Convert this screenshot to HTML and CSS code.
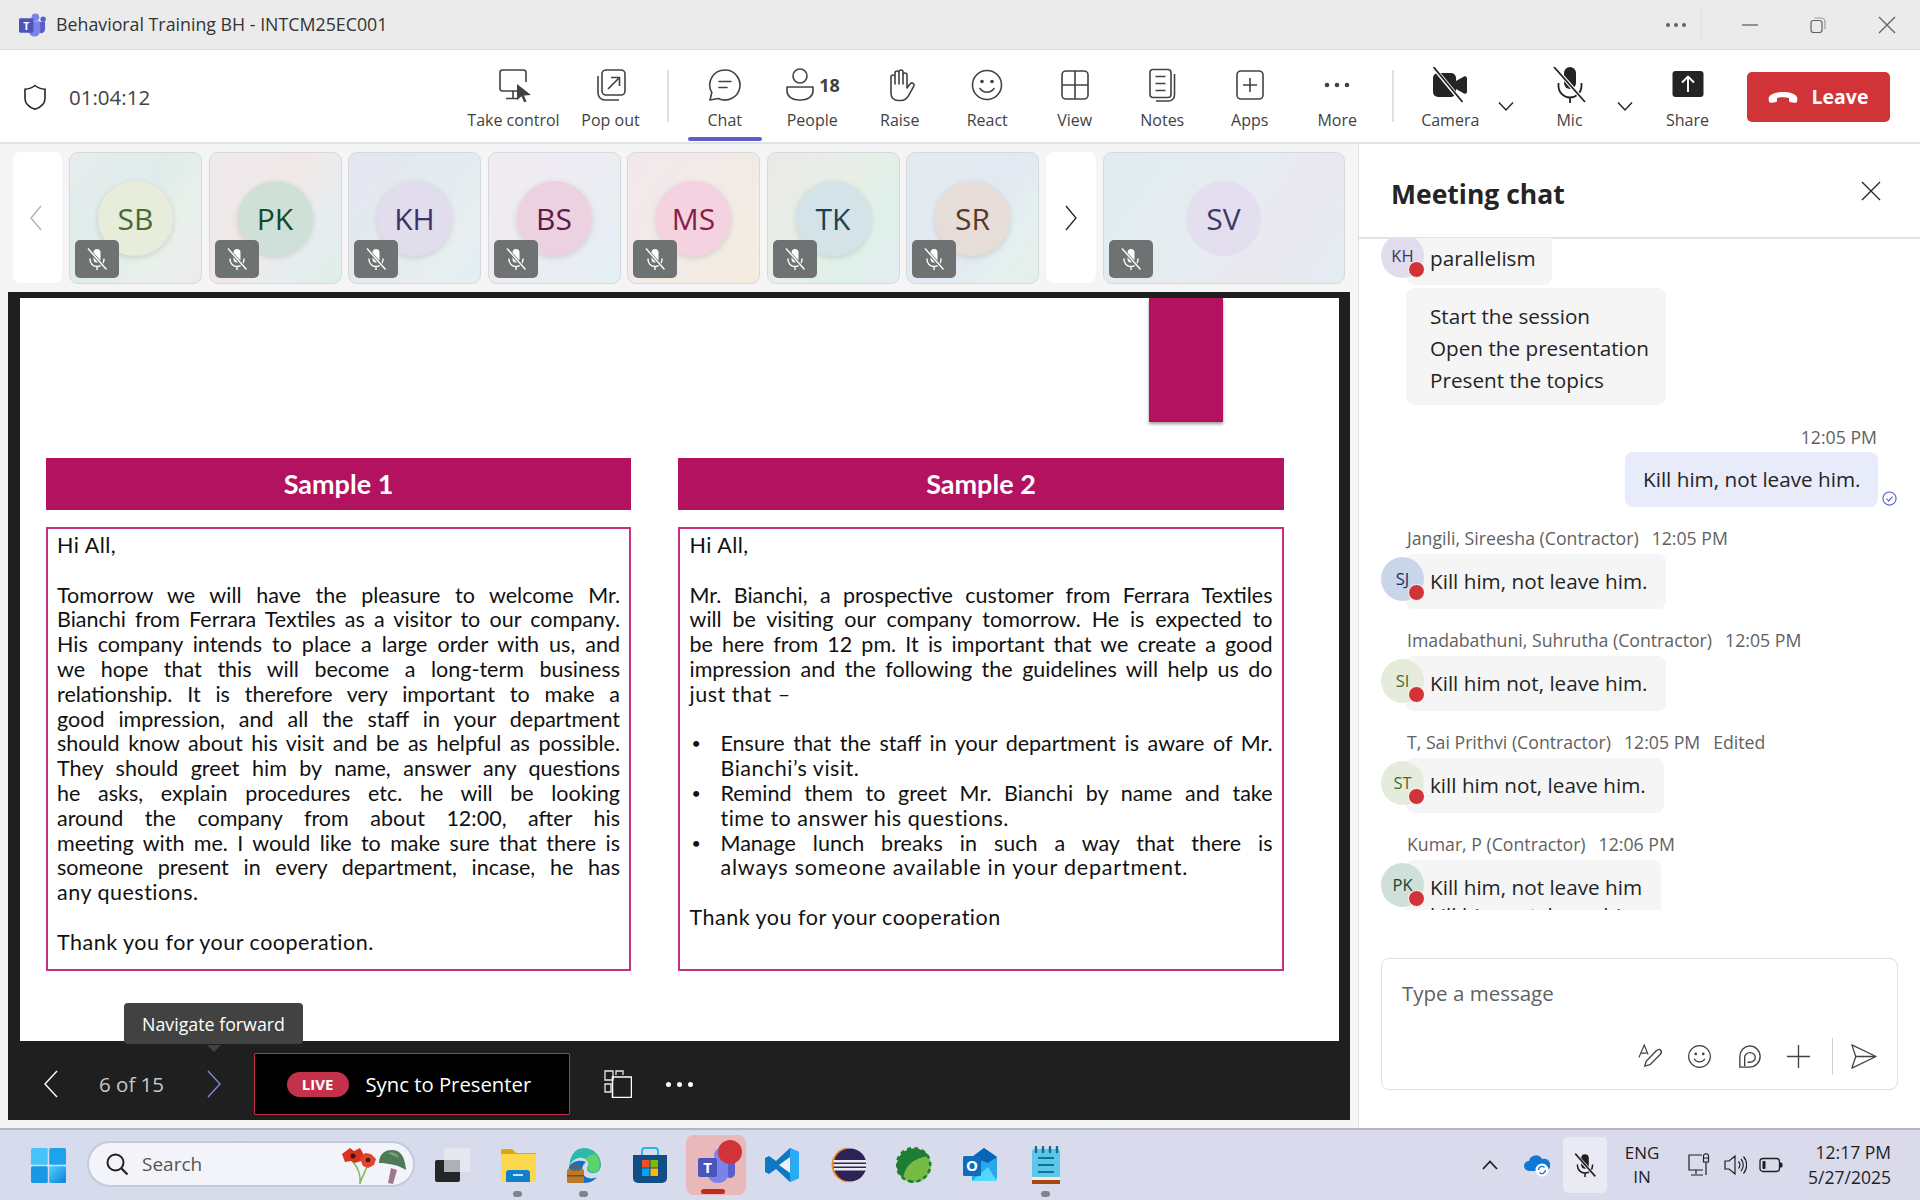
FILE: index.html
```html
<!DOCTYPE html>
<html lang="en">

<head>
    <meta charset="UTF-8">
    <title>Behavioral Training BH - INTCM25EC001</title>
    <link rel="stylesheet" href="styles.css">
</head>

<body>
    <svg class="defs" width="0" height="0">
        <symbol id="mic-off" viewBox="0 0 24 24">
            <rect x="8.5" y="2" width="7" height="13.5" rx="3.5" fill="currentColor"/>
            <path d="M5 11.5v1a7 7 0 0 0 14 0v-1M12 19.5V23" fill="none" stroke="currentColor" stroke-width="1.4"/>
            <path d="M2.5 1.5l19 21" stroke="#6f7272" stroke-width="3.2"/>
            <path d="M3 1.5l18.5 21" stroke="currentColor" stroke-width="1.4"/>
        </symbol>
        <symbol id="mic-off-dark" viewBox="0 0 24 24">
            <rect x="8.5" y="2" width="7" height="13.5" rx="3.5" fill="#1f1f1f"/>
            <path d="M5 11.5v1a7 7 0 0 0 14 0v-1M12 19.5V23" fill="none" stroke="#1f1f1f" stroke-width="1.4"/>
            <path d="M2.5 1.5l19 21" stroke="#eaeaf4" stroke-width="3.2"/>
            <path d="M3 1.5l18.5 21" stroke="#1f1f1f" stroke-width="1.4"/>
        </symbol>
        <symbol id="smile" viewBox="0 0 36 36">
            <circle cx="18" cy="18" r="14.5" fill="none" stroke="currentColor" stroke-width="1.6"/>
            <circle cx="13" cy="14.5" r="1.8" fill="currentColor"/>
            <circle cx="23" cy="14.5" r="1.8" fill="currentColor"/>
            <path d="M11 21.5c3.5 5 10.5 5 14 0" fill="none" stroke="currentColor" stroke-width="1.6" stroke-linecap="round"/>
        </symbol>
        <symbol id="chev-down" viewBox="0 0 20 20">
            <path d="M3 6.5l7 7.5 7-7.5" fill="none" stroke="currentColor" stroke-width="1.4"/>
        </symbol>
    </svg>

    <header class="titlebar">
        <svg class="teams-logo" viewBox="0 0 28 24">
            <circle cx="17" cy="4" r="4" fill="#7b83eb"/>
            <circle cx="25" cy="6" r="2.8" fill="#5b5fc7"/>
            <path d="M20 9h7v8a4 4 0 0 1-7 2z" fill="#5b5fc7"/>
            <path d="M8 8h14v10a6 6 0 0 1-12 0z" fill="#7b83eb"/>
            <rect x="0" y="5" width="15" height="15" rx="1.5" fill="#4b53bc"/>
            <text x="7.5" y="17" class="logo-t">T</text>
        </svg>
        <span class="title-text">Behavioral Training BH - INTCM25EC001</span>
        <div class="window-ctrls">
            <span class="win-dots"><i></i><i></i><i></i></span>
            <span class="win-sep"></span>
            <svg class="win-min" viewBox="0 0 16 2"><path d="M0 1h16" stroke="#616161" stroke-width="1.3"/></svg>
            <svg class="win-max" viewBox="0 0 16 16"><rect x="1" y="3.5" width="11" height="12" rx="2.5" fill="none" stroke="#616161" stroke-width="1.2"/><path d="M4.5 1h6.5a4 4 0 0 1 4 4v7" fill="none" stroke="#9a9a9a" stroke-width="1.2"/></svg>
            <svg class="win-close" viewBox="0 0 18 18"><path d="M1 1l16 16M17 1L1 17" stroke="#616161" stroke-width="1.3"/></svg>
        </div>
    </header>

    <nav class="toolbar">
        <div class="timer">
            <svg class="shield" viewBox="0 0 24 26"><path d="M12 1.5c3 2.5 6 3.5 10 3.7v9c0 5-4 9-10 11-6-2-10-6-10-11v-9c4-.2 7-1.2 10-3.700z" fill="none" stroke="#242424" stroke-width="1.6"/></svg>
            <span>01:04:12</span>
        </div>

        <button class="tool tool-wide">
            <svg class="ic" viewBox="0 0 36 36"><path d="M22 24H6.5A2.500 2.500 0 0 1 4 21.500V5.500A2.500 2.500 0 0 1 6.500 3h21A2.500 2.500 0 0 1 30 5.500V15M17 24v7M10 31.500h11" fill="none" stroke="#424242" stroke-width="1.6"/><path d="M21 17l14 11-7 .6 2.500 6-2.300.6-2.700-6-4.500 4z" fill="#424242"/></svg>
            <span>Take control</span>
        </button>
        <button class="tool tool-wide">
            <svg class="ic" viewBox="0 0 36 36"><rect x="9" y="3" width="23" height="25" rx="4" fill="none" stroke="#424242" stroke-width="1.6"/><path d="M5 9v17a7 7 0 0 0 7 7h14" fill="none" stroke="#424242" stroke-width="1.6"/><path d="M15 22l11-11M18 10.500h8.500V19" fill="none" stroke="#424242" stroke-width="1.6"/></svg>
            <span>Pop out</span>
        </button>
        <span class="tool-sep"></span>

        <button class="tool tool-active">
            <svg class="ic" viewBox="0 0 36 36"><path d="M18 3a15 15 0 1 1-6.500 28.500L3 33l1.800-7.500A15 15 0 0 1 18 3z" fill="none" stroke="#424242" stroke-width="1.6" stroke-linejoin="round"/><path d="M12 14.500h12M12 20.500h8" stroke="#424242" stroke-width="1.6" stroke-linecap="round"/></svg>
            <span>Chat</span>
        </button>
        <button class="tool">
            <span class="people-ic">
                <svg class="ic" viewBox="0 0 32 36"><circle cx="16" cy="9" r="7" fill="none" stroke="#424242" stroke-width="1.6"/><path d="M3 20h26v4a11 9 0 0 1-11 9h-4a11 9 0 0 1-11-9z" fill="none" stroke="#424242" stroke-width="1.6" stroke-linejoin="round"/></svg>
                <b>18</b>
            </span>
            <span>People</span>
        </button>
        <button class="tool">
            <svg class="ic" viewBox="0 0 36 36"><path d="M9 24V10a2 2 0 0 1 4 0v7V6a2 2 0 0 1 4 0v11V5a2 2 0 0 1 4 0v12V8a2 2 0 0 1 4 0v13l3-4a2.200 2.200 0 0 1 3.700 2.400l-5 9c-1.500 2.600-3.500 5.100-7.700 5.100h-3c-4 0-7-3-7-7z" fill="none" stroke="#424242" stroke-width="1.6" stroke-linejoin="round"/></svg>
            <span>Raise</span>
        </button>
        <button class="tool">
            <svg class="ic ic-text"><use href="#smile"/></svg>
            <span>React</span>
        </button>
        <button class="tool">
            <svg class="ic" viewBox="0 0 36 36"><rect x="5" y="4" width="26" height="28" rx="4" fill="none" stroke="#424242" stroke-width="1.6"/><path d="M18 4v28M5 18h26" stroke="#424242" stroke-width="1.6"/></svg>
            <span>View</span>
        </button>
        <button class="tool">
            <svg class="ic" viewBox="0 0 36 36"><rect x="6" y="2.500" width="21" height="28" rx="3" fill="none" stroke="#424242" stroke-width="1.6"/><path d="M11.500 9.500h10M11.500 16.500h10M11.500 23.500h10" stroke="#424242" stroke-width="1.6"/><path d="M30.500 7v21a6 6 0 0 1-6 6H12" fill="none" stroke="#424242" stroke-width="1.6"/></svg>
            <span>Notes</span>
        </button>
        <button class="tool">
            <svg class="ic" viewBox="0 0 36 36"><rect x="5" y="4" width="26" height="28" rx="4" fill="none" stroke="#424242" stroke-width="1.6"/><path d="M18 11v14M11 18h14" stroke="#424242" stroke-width="1.6"/></svg>
            <span>Apps</span>
        </button>
        <button class="tool">
            <svg class="ic" viewBox="0 0 36 36"><circle cx="8" cy="18" r="2.300" fill="#424242"/><circle cx="18" cy="18" r="2.300" fill="#424242"/><circle cx="28" cy="18" r="2.300" fill="#424242"/></svg>
            <span>More</span>
        </button>
        <span class="tool-sep tool-sep-right"></span>

        <button class="tool tool-cam">
            <svg class="ic" viewBox="0 0 36 36"><rect x="1" y="6" width="23" height="24" rx="5" fill="#242424"/><path d="M24 14l8-4.500c1.500-.8 3 .2 3 2v13c0 1.800-1.500 2.800-3 2L24 22z" fill="#242424"/><path d="M2 1l28 34" stroke="#fff" stroke-width="4"/><path d="M1.500 0l29 35" stroke="#242424" stroke-width="1.8"/></svg>
            <span>Camera</span>
        </button>
        <svg class="chev"><use href="#chev-down"/></svg>
        <button class="tool tool-mic">
            <svg class="ic" viewBox="0 0 36 36"><rect x="12" y="0" width="12" height="22" rx="6" fill="#242424"/><path d="M6.500 16v3a11.500 11.500 0 0 0 23 0v-3M18 30.500V36" fill="none" stroke="#242424" stroke-width="1.8"/><path d="M3 1l30 34" stroke="#fff" stroke-width="4"/><path d="M2 0l31 35" stroke="#242424" stroke-width="1.8"/></svg>
            <span>Mic</span>
        </button>
        <svg class="chev"><use href="#chev-down"/></svg>
        <button class="tool tool-share">
            <svg class="ic" viewBox="0 0 36 36"><rect x="2.500" y="4" width="31" height="26" rx="3" fill="#242424"/><path d="M18 25V10M12 15.500L18 9.500l6 6" fill="none" stroke="#fff" stroke-width="1.9"/></svg>
            <span>Share</span>
        </button>
        <button class="leave-btn">
            <svg class="leave-ic" viewBox="0 0 30 16"><path d="M15 1C8 1 2.500 3 1 6c-.6 1.300-.4 3 0 4.500.3 1 1.300 1.300 2.300 1.200l4.200-.5c1-.1 1.500-.8 1.500-1.700V7c3.500-1 8.500-1 12 0v2.500c0 .9.500 1.600 1.500 1.700l4.200.5c1 .1 2-.2 2.300-1.200.4-1.500.6-3.200 0-4.500C27.500 3 22 1 15 1z" fill="#fff" transform="translate(0 2)"/></svg>
            <b>Leave</b>
        </button>
    </nav>

    <main class="meeting">
        <section class="stage">
            <div class="thumbs">
                <div class="thumb-nav">
                    <svg class="nav-chev nav-chev-prev" viewBox="0 0 12 26"><path d="M11 1L1 13l10 12" fill="none" stroke="#b0b0b0" stroke-width="1.3"/></svg>
                </div>
                <div class="thumb grad-1"><span class="tile-av av-sb">SB</span><span class="mute"><svg><use href="#mic-off"/></svg></span></div>
                <div class="thumb grad-2"><span class="tile-av av-pk">PK</span><span class="mute"><svg><use href="#mic-off"/></svg></span></div>
                <div class="thumb grad-3"><span class="tile-av av-kh">KH</span><span class="mute"><svg><use href="#mic-off"/></svg></span></div>
                <div class="thumb grad-4"><span class="tile-av av-bs">BS</span><span class="mute"><svg><use href="#mic-off"/></svg></span></div>
                <div class="thumb grad-5"><span class="tile-av av-ms">MS</span><span class="mute"><svg><use href="#mic-off"/></svg></span></div>
                <div class="thumb grad-6"><span class="tile-av av-tk">TK</span><span class="mute"><svg><use href="#mic-off"/></svg></span></div>
                <div class="thumb grad-7"><span class="tile-av av-sr">SR</span><span class="mute"><svg><use href="#mic-off"/></svg></span></div>
                <div class="thumb-nav thumb-nav-next">
                    <svg class="nav-chev" viewBox="0 0 12 26"><path d="M1 1l10 12L1 25" fill="none" stroke="#242424" stroke-width="1.3"/></svg>
                </div>
                <div class="thumb thumb-big grad-8"><span class="tile-av av-sv">SV</span><span class="mute"><svg><use href="#mic-off"/></svg></span></div>
            </div>

            <div class="frame">
                <div class="slide">
                    <div class="slide-tab"></div>
                    <div class="samples">
                        <div class="sample sample-1">
                            <h2>Sample 1</h2>
                            <div class="sample-box">
                                <div class="ln-end">Hi All,</div>
                                <div class="ln-blank"></div>
                                <div class="ln">Tomorrow we will have the pleasure to welcome Mr.</div>
                                <div class="ln">Bianchi from Ferrara Textiles as a visitor to our company.</div>
                                <div class="ln">His company intends to place a large order with us, and</div>
                                <div class="ln">we hope that this will become a long-term business</div>
                                <div class="ln">relationship. It is therefore very important to make a</div>
                                <div class="ln">good impression, and all the staff in your department</div>
                                <div class="ln">should know about his visit and be as helpful as possible.</div>
                                <div class="ln">They should greet him by name, answer any questions</div>
                                <div class="ln">he asks, explain procedures etc. he will be looking</div>
                                <div class="ln">around the company from about 12:00, after his</div>
                                <div class="ln">meeting with me. I would like to make sure that there is</div>
                                <div class="ln">someone present in every department, incase, he has</div>
                                <div class="ln-end">any questions.</div>
                                <div class="ln-blank"></div>
                                <div class="ln-end">Thank you for your cooperation.</div>
                            </div>
                        </div>
                        <div class="sample sample-2">
                            <h2>Sample 2</h2>
                            <div class="sample-box">
                                <div class="ln-end">Hi All,</div>
                                <div class="ln-blank"></div>
                                <div class="ln">Mr. Bianchi, a prospective customer from Ferrara Textiles</div>
                                <div class="ln">will be visiting our company tomorrow. He is expected to</div>
                                <div class="ln">be here from 12 pm. It is important that we create a good</div>
                                <div class="ln">impression and the following the guidelines will help us do</div>
                                <div class="ln-end">just that –</div>
                                <div class="ln-blank"></div>
                                <div class="ln bullet">Ensure that the staff in your department is aware of Mr.</div>
                                <div class="ln-end indent">Bianchi’s visit.</div>
                                <div class="ln bullet">Remind them to greet Mr. Bianchi by name and take</div>
                                <div class="ln-end indent">time to answer his questions.</div>
                                <div class="ln bullet">Manage lunch breaks in such a way that there is</div>
                                <div class="ln-end indent indent-wide">always someone available in your department.</div>
                                <div class="ln-blank"></div>
                                <div class="ln-end">Thank you for your cooperation</div>
                            </div>
                        </div>
                    </div>
                </div>

                <div class="slide-bar">
                    <svg class="bar-prev" viewBox="0 0 14 28"><path d="M13 1L1 14l12 13" fill="none" stroke="#fff" stroke-width="1.4"/></svg>
                    <span class="page-count">6 of 15</span>
                    <svg class="bar-next" viewBox="0 0 14 28"><path d="M1 1l12 13L1 27" fill="none" stroke="#8388d8" stroke-width="1.4"/></svg>
                    <div class="sync-box">
                        <span class="live-pill">LIVE</span>
                        <span>Sync to Presenter</span>
                    </div>
                    <svg class="bar-layout" viewBox="0 0 28 28"><path d="M1 1h8v9H1zM12 5V1h7v4M1 14h6v8H1z" fill="none" stroke="#e8e8e8" stroke-width="1.3"/><rect x="8.500" y="7" width="19" height="20.500" fill="none" stroke="#fff" stroke-width="1.5"/></svg>
                    <span class="bar-dots"><i></i><i></i><i></i></span>
                    <div class="tooltip">Navigate forward</div>
                </div>
            </div>
        </section>

        <aside class="chat">
            <div class="chat-head">
                <h1>Meeting chat</h1>
                <svg class="chat-close" viewBox="0 0 20 20"><path d="M1 1l18 18M19 1L1 19" stroke="#242424" stroke-width="1.3"/></svg>
            </div>

            <div class="chat-msgs">
                <div class="msg msg-first">
                    <span class="av av-kh">KH<i class="dot"></i></span>
                    <div class="bubble bubble-clip">parallelism</div>
                </div>
                <div class="bubble bubble-multi">
                    <div>Start the session</div>
                    <div>Open the presentation</div>
                    <div>Present the topics</div>
                </div>

                <div class="own-time">12:05 PM</div>
                <div class="own-row">
                    <div class="bubble bubble-own">Kill him, not leave him.</div>
                    <svg class="seen" viewBox="0 0 16 16"><circle cx="8" cy="8" r="7" fill="none" stroke="#5b5fc7" stroke-width="1.2"/><path d="M4.800 8.200l2.300 2.300 4.200-4.600" fill="none" stroke="#5b5fc7" stroke-width="1.2"/></svg>
                </div>

                <div class="msg-meta">Jangili, Sireesha (Contractor)<em>12:05 PM</em></div>
                <div class="msg">
                    <span class="av av-sj">SJ<i class="dot"></i></span>
                    <div class="bubble">Kill him, not leave him.</div>
                </div>

                <div class="msg-meta">Imadabathuni, Suhrutha (Contractor)<em>12:05 PM</em></div>
                <div class="msg">
                    <span class="av av-si">SI<i class="dot"></i></span>
                    <div class="bubble">Kill him not, leave him.</div>
                </div>

                <div class="msg-meta">T, Sai Prithvi (Contractor)<em>12:05 PM</em><em>Edited</em></div>
                <div class="msg">
                    <span class="av av-si">ST<i class="dot"></i></span>
                    <div class="bubble bubble-w2">kill him not, leave him.</div>
                </div>

                <div class="msg-meta">Kumar, P (Contractor)<em>12:06 PM</em></div>
                <div class="msg">
                    <span class="av av-pk">PK<i class="dot"></i></span>
                    <div class="bubble bubble-w3">
                        <div>Kill him, not leave him</div>
                        <div class="next-line">kill him not, leave him</div>
                    </div>
                </div>
            </div>

            <div class="composer">
                <div class="placeholder">Type a message</div>
                <div class="composer-tools">
                    <svg class="c-ic" viewBox="0 0 28 28"><path d="M2 15L7.500 2l4 10M4 10.500h6" fill="none" stroke="#424242" stroke-width="1.2"/><path d="M8 24l1.500-5L20 8c1.500-1.500 3.800-1.500 4.600-.6s.9 3-.6 4.600L13.500 22.500z" fill="none" stroke="#424242" stroke-width="1.4"/></svg>
                    <svg class="c-ic c-smile"><use href="#smile"/></svg>
                    <svg class="c-ic" viewBox="0 0 28 28"><path d="M14 3a11 11 0 1 1 0 22H4V14A11 11 0 0 1 14 3z" fill="none" stroke="#424242" stroke-width="1.4"/><path d="M9 24v-9a5.500 5 0 1 1 5.500 5H12" fill="none" stroke="#424242" stroke-width="1.4"/></svg>
                    <svg class="c-ic" viewBox="0 0 28 28"><path d="M14 2v24M2 14h24" stroke="#424242" stroke-width="1.4"/></svg>
                    <span class="c-sep"></span>
                    <svg class="c-ic" viewBox="0 0 28 28"><path d="M2 2l25 12L2 26l4-12zM6 14h21" fill="none" stroke="#424242" stroke-width="1.3" stroke-linejoin="round"/></svg>
                </div>
            </div>
        </aside>
    </main>

    <footer class="taskbar">
        <svg class="start" viewBox="0 0 35 35">
            <defs>
                <linearGradient id="win-a" x1="0" y1="0" x2="1" y2="1"><stop offset="0" stop-color="#4fd0fb"/><stop offset="1" stop-color="#0f7fdb"/></linearGradient>
            </defs>
            <rect width="16.800" height="16.800" rx="1.500" fill="#46c4f7"/>
            <rect x="18.200" width="16.800" height="16.800" rx="1.500" fill="#1fa2ec"/>
            <rect y="18.200" width="16.800" height="16.800" rx="1.500" fill="#1a98e8"/>
            <rect x="18.200" y="18.200" width="16.800" height="16.800" rx="1.500" fill="url(#win-a)"/>
        </svg>
        <div class="search">
            <svg class="search-ic" viewBox="0 0 24 24"><circle cx="10.500" cy="10.500" r="8" fill="none" stroke="#1f1f1f" stroke-width="2"/><path d="M16.500 16.500l6 6" stroke="#1f1f1f" stroke-width="2.200"/></svg>
            <span>Search</span>
            <svg class="search-art" viewBox="0 0 64 50">
                <path d="M10 22c6 6 9 14 8 23M26 24c-2 8-6 14-8 20" fill="none" stroke="#85b85c" stroke-width="1.600"/>
                <path d="M0 15l8-6 4 3 6-3 4 7-3 6-6 2-4-2-6 1z" fill="#d8331d"/>
                <circle cx="11" cy="17" r="2.500" fill="#3a1b12"/>
                <path d="M18 20l5-6 6 1 5 5-2 6-6 3-5-2z" fill="#e0442a"/>
                <circle cx="26" cy="21" r="2.300" fill="#3a1b12"/>
                <path d="M37 24c0-7 4-13 13-13s13 7 14 20c-8-5-18-7-27-7z" fill="#4f7a58"/>
                <path d="M46 14c4-2 9 0 11 5-4-2-8-3-11-5z" fill="#7ba37f"/>
                <path d="M49 29l6 2-4 14-5-1z" fill="#a3758a"/>
            </svg>
        </div>
        <div class="apps">
            <div class="app">
                <svg viewBox="0 0 36 36"><rect x="1" y="13" width="25" height="22" rx="2" fill="#262626"/><rect x="10" y="1" width="26" height="24" rx="2" fill="#e9e9ee" opacity=".85"/><rect x="10" y="13" width="16" height="12" fill="#aeb0b6"/></svg>
            </div>
            <div class="app app-open">
                <svg viewBox="0 0 36 36"><path d="M1 4a2 2 0 0 1 2-2h9l4 4h20v28H1z" fill="#e0a50e"/><rect x="1" y="7" width="35" height="28" fill="#fcd84f"/><path d="M6 35v-9a3 3 0 0 1 3-3h18a3 3 0 0 1 3 3v9z" fill="#0f80cc"/><rect x="13" y="27" width="10" height="2" fill="#bfe3f7"/></svg>
            </div>
            <div class="app app-open">
                <svg viewBox="0 0 36 36">
                    <path d="M18 1a17 17 0 0 1 17 17c0 6-5 9-10 8-4-1-5-4-3-7 2-4-3-9-9-8C7 12 3 17 3 23 3 10 8 1 18 1z" fill="#2eb9a6"/>
                    <path d="M30 8c4 5 5 11 2 15-3 3-8 3-10-1 2-4 0-8-3-10 4-3 8-6 11-4z" fill="#5fd36b"/>
                    <path d="M3 20C1 30 10 36 18 36c6 0 11-3 13-6-6 3-12 1-14-3-2-5 0-10 3-12-7-3-15 0-17 5z" fill="#1271c4"/>
                    <rect x="1" y="22" width="17" height="14" rx="1.500" fill="#bb7a2a"/><rect x="6" y="19" width="7" height="4" fill="none" stroke="#8c5a1e" stroke-width="1.500"/><rect x="1" y="28" width="17" height="1.500" fill="#7c4d16"/>
                </svg>
            </div>
            <div class="app">
                <svg viewBox="0 0 36 36"><path d="M10 8V4a3 3 0 0 1 3-3h10a3 3 0 0 1 3 3v4" fill="none" stroke="#32b4e8" stroke-width="2"/><path d="M1 8h34v23a5 5 0 0 1-5 5H6a5 5 0 0 1-5-5z" fill="#134d86"/><rect x="10" y="13" width="7.500" height="7.500" fill="#f25022"/><rect x="18.500" y="13" width="7.500" height="7.500" fill="#7fba00"/><rect x="10" y="21.500" width="7.500" height="7.500" fill="#00a4ef"/><rect x="18.500" y="21.500" width="7.500" height="7.500" fill="#ffb900"/></svg>
            </div>
            <div class="app app-teams">
                <svg viewBox="0 0 40 36"><circle cx="25" cy="8" r="7" fill="#7b83eb"/><circle cx="35" cy="12" r="5" fill="#5b5fc7"/><path d="M28 15h11v11a5 5 0 0 1-9 3z" fill="#5b5fc7"/><path d="M12 14h20v14a10 8 0 0 1-20 0z" fill="#7b83eb"/><rect x="2" y="11" width="19" height="19" rx="2" fill="#4b53bc"/><text x="11.500" y="26" class="logo-t logo-t-big">T</text></svg>
                <span class="app-badge"></span>
                <span class="app-running"></span>
            </div>
            <div class="app">
                <svg viewBox="0 0 36 36"><path d="M26 1L35 5v26l-9 4-14-13-7 5-4-2v-14l4-2 7 5z" fill="#0d78c6"/><path d="M26 1L35 5v26l-9 4z" fill="#2aaaf3"/><path d="M26 10L15 18l11 8z" fill="#eef0f9"/></svg>
            </div>
            <div class="app">
                <svg viewBox="0 0 36 36"><path d="M19 .500a17.500 17.500 0 0 0 0 35c-12-3-12-32 0-35z" fill="#f08f1c"/><circle cx="20" cy="18" r="16.500" fill="#2c2255"/><path d="M3.500 13h33v2.500h-33zM3.500 17h33v2.500h-33zM4 21h32v2.500H4z" fill="#eceaf4"/></svg>
            </div>
            <div class="app">
                <svg viewBox="0 0 36 36"><circle cx="18" cy="18.500" r="17" fill="#76bb44"/><path d="M18 1.500A17 17 0 0 0 7 31.500C9 18 18 11 33 9 30 4.500 24.500 1.500 18 1.500z" fill="#1d7d34"/><circle cx="18" cy="18.500" r="16.700" fill="none" stroke="#1d7d34" stroke-width="2.600" stroke-dasharray="3 2.500" stroke-dashoffset="1" transform="rotate(100 18 18)" pathLength="78"/><path d="M11 26C11 16 20 12 30 10c0 10-4 18-13 18-2 0-4-.5-6-2z" fill="#76bb44"/></svg>
            </div>
            <div class="app">
                <svg viewBox="0 0 36 36"><path d="M22 1l13 9v20a4 4 0 0 1-4 4H10V10z" fill="#28a8ea"/><path d="M22 1l13 9-9 6-16-6z" fill="#0364b8"/><path d="M10 34l16-14 9 14z" fill="#50d9ff"/><rect x="1" y="9" width="18" height="20" rx="1.500" fill="#0f6cbd"/><text x="10" y="24" class="outlook-o">O</text></svg>
            </div>
            <div class="app app-open">
                <svg class="notepad" viewBox="0 0 28 38"><rect y="3" width="28" height="29" rx="3" fill="#5ec6e8"/><rect y="32" width="28" height="6" fill="#a8480e"/><rect y="31" width="28" height="3" fill="#f2ece2"/><path d="M4 1v5M11 1v5M18 1v5M25 1v5" stroke="#0b6f96" stroke-width="2.400" stroke-linecap="round"/><path d="M6 12h16M6 19h16M6 26h16" stroke="#0b7696" stroke-width="2"/></svg>
            </div>
        </div>

        <div class="tray">
            <svg class="tray-up" viewBox="0 0 16 10"><path d="M1 9l7-7.500L15 9" fill="none" stroke="#1f1f1f" stroke-width="1.800"/></svg>
            <svg class="tray-cloud" viewBox="0 0 26 24"><path d="M5 18a5 5 0 0 1 0-10 7 7 0 0 1 13-2 6 6 0 0 1 4 12z" fill="#0f78d4"/><circle cx="18" cy="17" r="6.500" fill="#fff"/><path d="M14.500 17a3.500 3.500 0 0 1 6-2.500M21.500 17a3.500 3.500 0 0 1-6 2.500" fill="none" stroke="#0f78d4" stroke-width="1.400"/></svg>
            <div class="tray-mic"><svg><use href="#mic-off-dark"/></svg></div>
            <div class="tray-lang"><span>ENG</span><span>IN</span></div>
            <svg class="tray-ic" viewBox="0 0 24 24"><path d="M15 2H2v15h14M9 17v4M4 22h12M19 1a2 2 0 0 1 2.500 2v6h-5V3A2 2 0 0 1 19 1zM16.500 5h5M19 9v13" fill="none" stroke="#1f1f1f" stroke-width="1.200"/></svg>
            <svg class="tray-ic" viewBox="0 0 24 24"><path d="M2 8v8h4l6 5V3L6 8zM15.500 8.500a5 5 0 0 1 0 7M18 6a9 9 0 0 1 0 12M20.500 3.500a13 13 0 0 1 0 17" fill="none" stroke="#1f1f1f" stroke-width="1.200"/></svg>
            <svg class="tray-ic" viewBox="0 0 24 24"><rect x="1" y="5.500" width="19.500" height="13" rx="3" fill="none" stroke="#1f1f1f" stroke-width="1.300"/><rect x="3.500" y="8" width="3" height="8" rx="1" fill="#1f1f1f"/><path d="M21 9.500h1a1.500 1.500 0 0 1 1.500 1.500v2a1.500 1.500 0 0 1-1.500 1.500h-1z" fill="#1f1f1f"/></svg>
            <div class="tray-clock"><span>12:17 PM</span><span>5/27/2025</span></div>
        </div>
    </footer>
</body>

</html>
```
FILE: styles.css
```css
* {
    box-sizing: border-box;
}

html, body {
    margin: 0;
    padding: 0;
}

body {
    width: 1920px;
    height: 1200px;
    overflow: hidden;
    display: flex;
    flex-direction: column;
    font-family: "Open Sans", "Noto Sans", sans-serif;
    color: #242424;
    background: #f5f5f5;
}

.defs {
    position: absolute;
}

button {
    font: inherit;
    color: inherit;
    background: none;
    border: none;
    padding: 0;
}

h1, h2 {
    margin: 0;
}

/* title bar */
.titlebar {
    height: 50px;
    flex: none;
    display: flex;
    align-items: center;
    padding-left: 19px;
    background: #ebebeb;
    border-bottom: 1px solid #dcdcdc;
}

.teams-logo {
    width: 27px;
    height: 24px;
}

.logo-t {
    font: bold 11px "Open Sans", sans-serif;
    fill: #fff;
    text-anchor: middle;
}

.logo-t-big {
    font-size: 15px;
}

.title-text {
    margin: 0 0 2px 10px;
    font-size: 17.8px;
    color: #333;
}

.window-ctrls {
    margin-left: auto;
    display: flex;
    align-items: center;
    height: 100%;
}

.win-dots {
    display: flex;
    gap: 4px;
}

.win-dots i {
    width: 4px;
    height: 4px;
    border-radius: 50%;
    background: #616161;
}

.win-sep {
    width: 1px;
    height: 32px;
    margin-left: 15px;
    background: #e0e0e0;
}

.win-min {
    width: 16px;
    height: 2px;
    margin-left: 40px;
}

.win-max {
    width: 16px;
    height: 16px;
    margin-left: 52px;
}

.win-close {
    width: 18px;
    height: 18px;
    margin-left: 52px;
    margin-right: 24px;
}

/* meeting toolbar */
.toolbar {
    height: 94px;
    flex: none;
    display: flex;
    align-items: center;
    padding-left: 23px;
    background: #fff;
    border-bottom: 2px solid #e3e3e3;
}

.timer {
    width: 442px;
    display: flex;
    align-items: center;
    gap: 22px;
    margin-top: 2px;
    font-size: 20.5px;
    color: #424242;
}

.shield {
    width: 24px;
    height: 26px;
}

.tool {
    position: relative;
    width: 87.5px;
    height: 92px;
    display: flex;
    flex-direction: column;
    align-items: center;
    padding-top: 17px;
    font-size: 16px;
    line-height: 22px;
    color: #424242;
}

.tool-wide {
    width: 97px;
}

.ic {
    width: 36px;
    height: 36px;
    margin-bottom: 6px;
    flex: none;
}

.ic-text {
    color: #424242;
}

.people-ic {
    position: relative;
    display: flex;
    height: 42px;
    margin-right: 24px;
}

.people-ic b {
    position: absolute;
    left: 37px;
    top: 6px;
    font-size: 18px;
    line-height: 24px;
}

.tool-active::after {
    content: "";
    position: absolute;
    left: 7px;
    right: 7px;
    bottom: 1px;
    height: 4px;
    border-radius: 2px;
    background: #5b5fc7;
}

.tool-sep {
    width: 2px;
    height: 52px;
    margin: 0 12px 0 8px;
    background: #e0e0e0;
}

.tool-sep-right {
    margin: 0 12.5px 0 11px;
}

.chev {
    width: 20px;
    height: 20px;
    margin: 20px 2px 0;
    color: #242424;
}

.tool-mic {
    margin-left: 7.75px;
}

.tool-share {
    margin-left: 6.5px;
}

.leave-btn {
    width: 143px;
    height: 50px;
    margin: 1px 0 0 15.25px;
    display: flex;
    align-items: center;
    justify-content: center;
    gap: 14px;
    border-radius: 5px;
    background: #d13438;
    color: #fff;
    font-size: 19.5px;
}

.leave-ic {
    width: 30px;
    height: 16px;
}

/* main area */
.meeting {
    flex: 1;
    display: flex;
    min-height: 0;
}

.stage {
    width: 1358px;
    flex: none;
    display: flex;
    flex-direction: column;
    padding: 8px 0 8px 8px;
}

/* participant strip */
.thumbs {
    height: 132px;
    flex: none;
    display: flex;
    gap: 6.5px;
    padding-left: 5px;
}

.thumb-nav {
    width: 49px;
    height: 131px;
    margin-right: .5px;
    display: flex;
    align-items: center;
    justify-content: center;
    border-radius: 8px;
    background: #fff;
}

.thumb-nav-next {
    width: 50px;
    margin-right: .5px;
}

.nav-chev {
    width: 12px;
    height: 26px;
}

.nav-chev-prev {
    margin-right: 3px;
}

.thumb {
    position: relative;
    width: 133px;
    flex: none;
    display: flex;
    align-items: center;
    justify-content: center;
    border: 1px solid #d5dadd;
    border-radius: 9px;
}

.thumb-big {
    width: 242px;
}

.grad-1 { background: linear-gradient(125deg, #e6edee, #dfece9 45%, #e8f0ea 70%, #ecebef); }
.grad-2 { background: linear-gradient(125deg, #eee9ee, #f0e8e6 45%, #e8edf0 70%, #dfeee8); }
.grad-3 { background: linear-gradient(125deg, #e5e6f1, #e3ebef 50%, #e8eef0 75%, #e2eff4); }
.grad-4 { background: linear-gradient(125deg, #f0ebf1, #ececf2 50%, #e8edf2 75%, #e3f0f4); }
.grad-5 { background: linear-gradient(125deg, #f2e8ec, #f1ebe7 50%, #f3ecdf 100%); }
.grad-6 { background: linear-gradient(125deg, #ece9e6, #e6efe6 50%, #dff0ea 70%, #e3edf0); }
.grad-7 { background: linear-gradient(125deg, #e3ebee, #e2e9f2 50%, #e4eff0 75%, #e6f0e8); }
.grad-8 { background: linear-gradient(125deg, #e1ecf0, #e6ecf1 50%, #eae8ef 70%, #e3edf2); }

.tile-av {
    width: 75px;
    height: 75px;
    display: flex;
    align-items: center;
    justify-content: center;
    border-radius: 50%;
    font-size: 30px;
    font-weight: 500;
    box-shadow: 0 2px 6px rgba(0, 0, 0, .12);
}

.thumb-big .tile-av {
    box-shadow: none;
}

.av-sb { background: #e7ecdb; color: #4b6a30; }
.av-pk { background: #cfe0d8; color: #12492f; }
.av-kh { background: #e2dded; color: #3b3468; }
.av-bs { background: #ecd2e0; color: #5e1a40; }
.av-ms { background: #f5d2e0; color: #8a1c4a; }
.av-tk { background: #d4e3e8; color: #184554; }
.av-sr { background: #e6dcd8; color: #5c3626; }
.av-sv { background: #e3dfee; color: #3d3a6b; }
.av-sj { background: #c9d6ea; color: #16306a; }
.av-si { background: #e5ecdc; color: #4b6a30; }

.mute {
    position: absolute;
    left: 5px;
    bottom: 5px;
    width: 44px;
    height: 38px;
    display: flex;
    align-items: center;
    justify-content: center;
    border-radius: 5px;
    background: #6f7272;
    color: #fff;
}

.mute svg {
    width: 24px;
    height: 26px;
}

/* shared slide */
.frame {
    width: 1342px;
    height: 828px;
    flex: none;
    margin-top: 8px;
    padding: 6px 11px 0 12px;
    display: flex;
    flex-direction: column;
    background: #1f1f1f;
}

.slide {
    height: 743px;
    flex: none;
    background: #fff;
    font-family: "Lato", "Open Sans", sans-serif;
    color: #111;
}

.slide-tab {
    width: 74px;
    height: 124px;
    margin-left: 1129px;
    background: #b31261;
    box-shadow: 0 2px 3px rgba(0, 0, 0, .4);
}

.samples {
    display: flex;
    gap: 47px;
    margin-top: 36px;
    padding-left: 26px;
}

.sample-1 {
    width: 585px;
}

.sample-2 {
    width: 606px;
}

.sample h2 {
    height: 52px;
    font-size: 27px;
    line-height: 52px;
    text-align: center;
    background: #b31261;
    color: #fff;
}

.sample-box {
    height: 444px;
    margin-top: 17px;
    padding: 4px 9px 0 9px;
    border: 2px solid #c2337f;
    font-size: 21.5px;
    line-height: 24.8px;
}

.sample-2 .sample-box {
    padding: 4px 9.5px 0 9.5px;
}

.ln {
    text-align: justify;
    text-align-last: justify;
}

.ln-end {
    text-align: left;
    letter-spacing: .5px;
}

.ln-blank {
    height: 24.8px;
}

.bullet {
    position: relative;
    margin-left: 31px;
}

.bullet::before {
    content: "•";
    position: absolute;
    left: -29px;
    font-size: 16px;
}

.indent {
    margin-left: 31px;
}

.indent-wide {
    letter-spacing: .8px;
}

/* slide controls */
.slide-bar {
    position: relative;
    flex: 1;
    margin: 0 -11px 0 -12px;
    padding-top: 7px;
    display: flex;
    align-items: center;
    color: #fff;
}

.bar-prev {
    width: 14px;
    height: 28px;
    margin-left: 36px;
}

.page-count {
    width: 65px;
    margin-left: 41px;
    font-size: 20.5px;
    color: #c8c8c8;
    white-space: nowrap;
}

.bar-next {
    width: 14px;
    height: 28px;
    margin-left: 43px;
}

.sync-box {
    width: 316px;
    height: 62px;
    margin-left: 32.5px;
    padding-left: 32px;
    display: flex;
    align-items: center;
    gap: 17px;
    background: #000;
    border: 1px solid #c4314b;
    border-radius: 2px;
    font-size: 20.3px;
}

.live-pill {
    width: 62px;
    height: 25px;
    display: flex;
    align-items: center;
    justify-content: center;
    border-radius: 13px;
    background: #c4314b;
    font-size: 15px;
    font-weight: 700;
}

.bar-layout {
    width: 28px;
    height: 28px;
    margin-left: 34.5px;
}

.bar-dots {
    display: flex;
    gap: 6px;
    margin-left: 34px;
}

.bar-dots i {
    width: 5px;
    height: 5px;
    border-radius: 50%;
    background: #fff;
}

.tooltip {
    position: absolute;
    left: 116px;
    top: -38px;
    width: 179px;
    height: 41px;
    display: flex;
    align-items: center;
    justify-content: center;
    border-radius: 4px;
    background: #424242;
    font-size: 17.8px;
}

.tooltip::after {
    content: "";
    position: absolute;
    left: 83px;
    top: 42px;
    border: 7px solid transparent;
    border-top-color: #424242;
    border-bottom-width: 0;
}

/* chat panel */
.chat {
    flex: 1;
    display: flex;
    flex-direction: column;
    background: #fff;
    border-left: 1px solid #e0e0e0;
}

.chat-head {
    height: 95px;
    flex: none;
    display: flex;
    align-items: center;
    justify-content: space-between;
    padding: 6px 39px 0 32px;
    border-bottom: 2px solid #e3e3e3;
}

.chat-head h1 {
    font-size: 26.5px;
    font-weight: 700;
}

.chat-close {
    width: 20px;
    height: 20px;
    margin-bottom: 6px;
}

.chat-msgs {
    height: 672px;
    flex: none;
    margin-top: -1px;
    overflow: hidden;
    padding-left: 47px;
    font-size: 20.7px;
    line-height: 32px;
}

.msg {
    position: relative;
}

.bubble {
    width: 260px;
    padding: 11px 0 12px 24px;
    border-radius: 8px;
    background: #f5f5f5;
    white-space: nowrap;
}

.bubble-clip {
    width: 146px;
    padding: 4px 0 11px 24px;
    border-radius: 0 0 8px 8px;
}

.bubble-multi {
    margin-top: 3px;
    padding: 12px 0 9px 24px;
}

.bubble-w2 {
    width: 257.5px;
}

.bubble-w3 {
    width: 255px;
}

.next-line {
    margin-top: -4px;
}

.av {
    position: absolute;
    left: -25px;
    top: 3px;
    z-index: 1;
    width: 43px;
    height: 44px;
    display: flex;
    align-items: center;
    justify-content: center;
    border-radius: 50%;
    font-size: 16.5px;
    line-height: 1;
}

.msg-first .av {
    top: -4px;
}

.dot {
    position: absolute;
    right: -1px;
    bottom: 0;
    width: 17px;
    height: 17px;
    border-radius: 50%;
    background: #d13438;
    border: 1px solid #fff;
}

.own-time {
    width: 471px;
    margin-top: 22px;
    font-size: 17.7px;
    line-height: 20px;
    color: #616161;
    text-align: right;
}

.own-row {
    width: 491px;
    margin-top: 5px;
    display: flex;
    justify-content: flex-end;
    align-items: flex-end;
    gap: 4px;
}

.bubble-own {
    width: 253px;
    padding-left: 18px;
    background: #e8ebfa;
}

.seen {
    width: 15px;
    height: 15px;
    margin-bottom: 1px;
}

.msg-meta {
    margin: 21px 0 6px 1px;
    font-size: 17.7px;
    line-height: 20px;
    color: #616161;
    white-space: nowrap;
}

.msg-meta em {
    margin-left: 13px;
    font-style: normal;
}

.composer {
    width: 517px;
    height: 132px;
    flex: none;
    margin: 48px 0 0 22px;
    padding: 20px 20px 0;
    display: flex;
    flex-direction: column;
    border: 1px solid #e0e0e0;
    border-radius: 8px;
}

.placeholder {
    font-size: 20.5px;
    line-height: 28px;
    color: #616161;
}

.composer-tools {
    display: flex;
    align-items: center;
    justify-content: flex-end;
    margin-top: 31px;
    gap: 22.5px;
    color: #424242;
}

.c-ic {
    width: 27px;
    height: 27px;
}

.c-sep {
    width: 1px;
    height: 37px;
    margin: 0 -5px 0 -3px;
    background: #d1d1d1;
}

/* windows taskbar */
.taskbar {
    height: 72px;
    flex: none;
    display: flex;
    align-items: center;
    background: linear-gradient(90deg, #d6dced, #dadaeb);
    border-top: 2px solid #b5b6c2;
}

.start {
    width: 35px;
    height: 35px;
    margin-left: 31px;
}

.search {
    width: 328px;
    height: 46px;
    margin: 0 0 2px 21px;
    display: flex;
    align-items: center;
    padding: 0 7px 0 16px;
    border-radius: 23px;
    border: 2px solid #c5c9dc;
    background: #f2f4fa;
    font-size: 19px;
    color: #555;
}

.search-ic {
    width: 24px;
    height: 24px;
    margin-right: 13px;
}

.search-art {
    width: 64px;
    height: 50px;
    margin-left: auto;
}

.apps {
    display: flex;
    margin-left: 4px;
}

.app {
    position: relative;
    width: 66px;
    height: 60px;
    display: flex;
    align-items: center;
    justify-content: center;
}

.app svg {
    width: 36px;
    height: 36px;
}

.app svg.notepad {
    width: 28px;
    height: 38px;
}

.app-open::after {
    content: "";
    position: absolute;
    left: 28px;
    bottom: -2px;
    width: 9px;
    height: 6px;
    border-radius: 3px;
    background: #7f8290;
}

.app-teams {
    width: 60px;
    margin: 0 3px;
    border-radius: 8px;
    background: #e9b8ba;
}

.app-teams svg {
    width: 40px;
}

.app-badge {
    position: absolute;
    top: 5px;
    right: 4px;
    width: 24px;
    height: 24px;
    border-radius: 50%;
    background: #d13438;
}

.app-running {
    position: absolute;
    left: 15px;
    bottom: 1px;
    width: 24px;
    height: 5px;
    border-radius: 3px;
    background: #c42b1c;
}

.outlook-o {
    font: bold 15px "Open Sans", sans-serif;
    fill: #fff;
    text-anchor: middle;
}

.tray {
    margin-left: auto;
    padding-right: 29px;
    display: flex;
    align-items: center;
    color: #1f1f1f;
}

.tray-up {
    width: 16px;
    height: 10px;
}

.tray-cloud {
    width: 26px;
    height: 24px;
    margin-left: 26px;
}

.tray-mic {
    width: 44px;
    height: 56px;
    margin-left: 13px;
    display: flex;
    align-items: center;
    justify-content: center;
    border-radius: 5px;
    background: #eaeaf4;
}

.tray-mic svg {
    width: 26px;
    height: 28px;
}

.tray-lang {
    width: 70px;
    margin-right: 10px;
    display: flex;
    flex-direction: column;
    align-items: center;
    font-size: 17px;
    line-height: 24px;
}

.tray-ic {
    width: 24px;
    height: 24px;
    margin-right: 12px;
}

.tray-clock {
    width: 96px;
    display: flex;
    flex-direction: column;
    align-items: flex-end;
    font-size: 17.5px;
    line-height: 25px;
}
```
